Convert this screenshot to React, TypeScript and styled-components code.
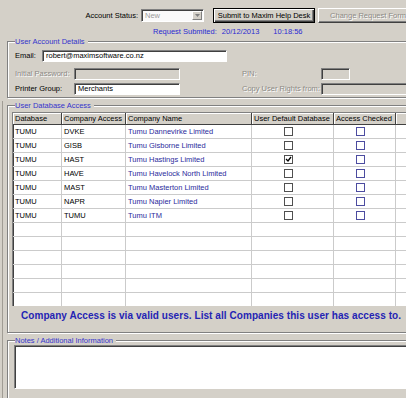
import React from 'react'
import styled, { createGlobalStyle } from 'styled-components'

const GlobalStyle = createGlobalStyle`
  * { box-sizing: border-box; }
  html, body {
    margin: 0;
    padding: 0;
    background: #d4d0c8;
  }
  body {
    font-family: 'Liberation Sans', Arial, sans-serif;
    font-size: 7.5px;
    color: #000;
  }
`

const rows = [
  { db: 'TUMU', access: 'DVKE', name: 'Tumu Dannevirke Limited', def: false },
  { db: 'TUMU', access: 'GISB', name: 'Tumu Gisborne Limited', def: false },
  { db: 'TUMU', access: 'HAST', name: 'Tumu Hastings Limited', def: true },
  { db: 'TUMU', access: 'HAVE', name: 'Tumu Havelock North Limited', def: false },
  { db: 'TUMU', access: 'MAST', name: 'Tumu Masterton Limited', def: false },
  { db: 'TUMU', access: 'NAPR', name: 'Tumu Napier Limited', def: false },
  { db: 'TUMU', access: 'TUMU', name: 'Tumu ITM', def: false },
]

const EMPTY_ROWS = 7

function Check({ checked, $tone }: { checked?: boolean; $tone: 'grey' | 'blue' }) {
  return (
    <CheckBox $tone={$tone}>
      {checked && (
        <svg width="7" height="7" viewBox="0 0 7 7">
          <path d="M1 3 L3 5 L6 1" fill="none" stroke="#000" strokeWidth="1.3" />
        </svg>
      )}
    </CheckBox>
  )
}

export default function App() {
  return (
    <Page>
      <GlobalStyle />
      <TopRow>
        <FieldLabel $w={68} $align="right">Account Status:</FieldLabel>
        <Combo>
          <ComboText>New</ComboText>
          <ComboButton>
            <svg width="5" height="3" viewBox="0 0 5 3">
              <path d="M0 0 H5 L2.5 3 Z" fill="#808080" />
            </svg>
          </ComboButton>
        </Combo>
        <Button $default $w={102}>Submit to Maxim Help Desk</Button>
        <Button $disabled $w={100}>Change Request Form</Button>
      </TopRow>

      <SubmittedLine>
        <span>Request Submited:</span>
        <span>20/12/2013</span>
        <span>10:18:56</span>
      </SubmittedLine>

      <Group $left={7}>
        <Caption>User Account Details</Caption>
        <AccountForm>
          <EmailRow>
            <FieldLabel $w={27}>Email:</FieldLabel>
            <TextBox $w={185}>robert@maximsoftware.co.nz</TextBox>
          </EmailRow>
          <FieldGrid $top={6}>
            <FieldLabel $disabled>Initial Password:</FieldLabel>
            <TextBox $disabled $w={106} />
            <span />
            <FieldLabel $disabled>PIN:</FieldLabel>
            <TextBox $disabled $w={29} />
          </FieldGrid>
          <FieldGrid $top={3}>
            <FieldLabel>Printer Group:</FieldLabel>
            <TextBox $w={106}>Merchants</TextBox>
            <span />
            <FieldLabel $disabled>Copy User Rights from:</FieldLabel>
            <TextBox $disabled $w={120} />
          </FieldGrid>
        </AccountForm>
      </Group>

      <Lower>
        <Group $top={3} $left={4}>
          <Caption>User Database Access</Caption>
          <Grid>
            <HeadRow>
              <HeadCell>Database</HeadCell>
              <HeadCell>Company Access</HeadCell>
              <HeadCell>Company Name</HeadCell>
              <HeadCell>User Default Database</HeadCell>
              <HeadCell>Access Checked</HeadCell>
              <HeadCell />
            </HeadRow>
            <Body>
              {rows.map((r, i) => (
                <BodyRow key={i}>
                  <Cell>{r.db}</Cell>
                  <Cell>{r.access}</Cell>
                  <Cell $blue>{r.name}</Cell>
                  <CheckCell>
                    <Check checked={r.def} $tone="grey" />
                  </CheckCell>
                  <CheckCell>
                    <Check $tone="blue" />
                  </CheckCell>
                  <Cell />
                </BodyRow>
              ))}
              {Array.from({ length: EMPTY_ROWS }).map((_, i) => (
                <BodyRow key={'e' + i}>
                  <Cell />
                  <Cell />
                  <Cell />
                  <Cell />
                  <Cell />
                  <Cell />
                </BodyRow>
              ))}
            </Body>
          </Grid>
          <Notice>
            Company Access is via valid users. List all Companies this user has access to.
          </Notice>
        </Group>

        <Group $top={3} $left={4}>
          <Caption>Notes / Additional Information</Caption>
          <NotesBox />
        </Group>
      </Lower>
    </Page>
  )
}

const Page = styled.div`
  width: 406px;
  height: 398px;
  overflow: hidden;
  padding-top: 8px;
`

const TopRow = styled.div`
  display: flex;
  align-items: center;
  height: 15px;
  padding-left: 70px;
  gap: 3px;

  & > button:first-of-type {
    margin-left: 6px;
  }
`

const FieldLabel = styled.div<{ $w?: number; $align?: string; $disabled?: boolean }>`
  ${(p) => (p.$w ? `width: ${p.$w}px; flex: none;` : '')}
  text-align: ${(p) => p.$align || 'left'};
  white-space: nowrap;
  line-height: 12px;
  color: ${(p) => (p.$disabled ? '#8c8a85' : '#000')};
  text-shadow: ${(p) => (p.$disabled ? '1px 1px 0 #fff' : 'none')};
`

const Combo = styled.div`
  flex: none;
  width: 63px;
  height: 13px;
  display: flex;
  align-items: stretch;
  background: #fafafa;
  border-top: 1px solid #808080;
  border-left: 1px solid #808080;
  border-right: 1px solid #fff;
  border-bottom: 1px solid #fff;
  box-shadow: inset 1px 1px 0 #404040;
`

const ComboText = styled.div`
  flex: 1;
  padding-left: 3px;
  line-height: 11px;
  color: #9a9a9a;
`

const ComboButton = styled.div`
  width: 10px;
  margin: 1px 1px 1px 0;
  background: #d4d0c8;
  border-top: 1px solid #fff;
  border-left: 1px solid #fff;
  border-right: 1px solid #808080;
  border-bottom: 1px solid #808080;
  display: flex;
  align-items: center;
  justify-content: center;
`

const Button = styled.button<{ $w: number; $default?: boolean; $disabled?: boolean }>`
  flex: none;
  width: ${(p) => p.$w}px;
  height: 15px;
  padding: 0;
  font-family: 'Liberation Sans', Arial, sans-serif;
  font-size: 7.5px;
  line-height: 11px;
  background: #d4d0c8;
  color: ${(p) => (p.$disabled ? '#8c8a85' : '#000')};
  text-shadow: ${(p) => (p.$disabled ? '1px 1px 0 #fff' : 'none')};
  border: 1px solid ${(p) => (p.$default ? '#000' : '#fff')};
  ${(p) => (p.$default ? '' : 'border-right-color: #404040; border-bottom-color: #404040;')}
  box-shadow: ${(p) =>
    p.$default
      ? 'inset 1px 1px 0 #fff, inset -1px -1px 0 #404040, inset -2px -2px 0 #808080'
      : 'inset -1px -1px 0 #808080'};
`

const SubmittedLine = styled.div`
  display: flex;
  gap: 5px;
  margin-top: 4px;
  padding-left: 153px;
  line-height: 9px;
  color: #2a2ad2;

  & > span:last-child {
    margin-left: 9px;
  }
`

const Group = styled.fieldset<{ $top?: number; $left: number }>`
  margin: ${(p) => p.$top ?? 1}px -30px 0 ${(p) => p.$left}px;
  padding: 0;
  min-width: 0;
  border: 1px solid #808080;
  box-shadow: inset 1px 1px 0 #fff, 1px 1px 0 #fff;
`

const Caption = styled.legend`
  margin-left: 7px;
  padding: 0 3px 0 0;
  line-height: 9px;
  background: #d4d0c8;
  color: #3434cc;
`

const AccountForm = styled.div`
  padding: 4px 0 2px 7px;
`

const EmailRow = styled.div`
  display: flex;
  align-items: center;
  height: 12px;
`

const FieldGrid = styled.div<{ $top: number }>`
  display: grid;
  grid-template-columns: 59px 106px 62px 79px auto;
  align-items: center;
  height: 12px;
  margin-top: ${(p) => p.$top}px;
`

const TextBox = styled.div<{ $w: number; $disabled?: boolean }>`
  width: ${(p) => p.$w}px;
  height: 12px;
  padding-left: 3px;
  line-height: 10px;
  white-space: nowrap;
  overflow: hidden;
  background: ${(p) => (p.$disabled ? '#d4d0c8' : '#fff')};
  border-top: 1px solid #808080;
  border-left: 1px solid #808080;
  border-right: 1px solid #fff;
  border-bottom: 1px solid #fff;
  box-shadow: inset 1px 1px 0 #404040;
`

const Lower = styled.div`
  margin-left: 2px;
  border-left: 1px solid #a09c94;
`

const cols = '49px 64px 126px 82px 62px 60px'

const Grid = styled.div`
  margin: 2px 0 0 4px;
  height: 194px;
  overflow: hidden;
  border-top: 1px solid #808080;
  border-left: 1px solid #808080;
`

const HeadRow = styled.div`
  display: grid;
  grid-template-columns: ${cols};
  height: 11px;
`

const HeadCell = styled.div`
  padding-left: 2px;
  line-height: 11px;
  white-space: nowrap;
  overflow: hidden;
  border-right: 1px solid #404040;
  box-shadow: inset 1px 1px 0 #fff;
`

const Body = styled.div`
  background: #fff;
  border-top: 1px solid #404040;
  box-shadow: inset 1px 0 0 #404040;
`

const BodyRow = styled.div`
  display: grid;
  grid-template-columns: ${cols};
  height: 14px;
  border-bottom: 1px solid #cbcbcb;
`

const Cell = styled.div<{ $blue?: boolean }>`
  padding-left: 2px;
  line-height: 13px;
  white-space: nowrap;
  overflow: hidden;
  color: ${(p) => (p.$blue ? '#2b2b9c' : '#000')};
  border-right: 1px solid #cbcbcb;
`

const CheckCell = styled.div`
  display: flex;
  align-items: center;
  justify-content: center;
  padding-right: 9px;
  border-right: 1px solid #cbcbcb;
`

const CheckBox = styled.div<{ $tone: 'grey' | 'blue' }>`
  width: 9px;
  height: 9px;
  background: #fff;
  border: 1px solid ${(p) => (p.$tone === 'blue' ? '#4c4ca0' : '#505050')};
  display: flex;
  align-items: center;
  justify-content: center;
`

const Notice = styled.div`
  margin: 4px 0 10px 13px;
  font-size: 10px;
  font-weight: 700;
  line-height: 12px;
  letter-spacing: 0.06px;
  white-space: nowrap;
  color: #2424b4;
`

const NotesBox = styled.div`
  margin: 0 0 20px 6px;
  height: 44px;
  background: #fff;
  border-top: 1px solid #808080;
  border-left: 1px solid #808080;
  border-right: 1px solid #fff;
  border-bottom: 1px solid #fff;
  box-shadow: inset 1px 1px 0 #404040;
`
